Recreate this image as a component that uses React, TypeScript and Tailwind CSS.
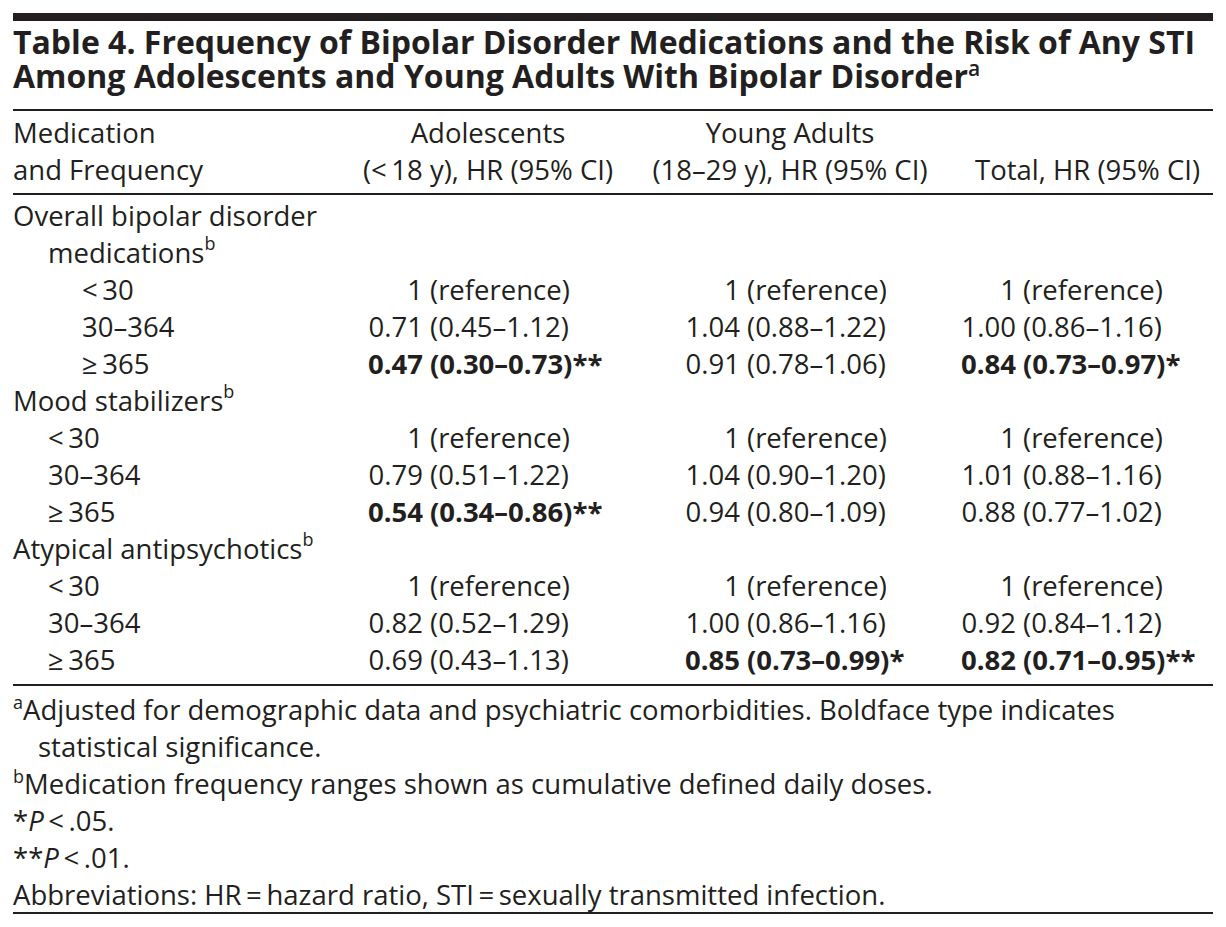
import React from 'react';

type Val = { est: string; ci: string; stars?: string; bold?: boolean };
type Row = { label: string; vals: [Val, Val, Val] };
type Section = { title: React.ReactNode; indent: string; rows: Row[] };

const ref: Val = { est: '1', ci: 'reference' };

const Sup = ({ children }: { children: React.ReactNode }) => (
  <sup className="-top-[0.7em] text-[18px] leading-none">{children}</sup>
);

const sections: Section[] = [
  {
    title: (
      <>
        Overall bipolar disorder
        <br />
        medications<Sup>b</Sup>
      </>
    ),
    indent: 'pl-[69px]',
    rows: [
      { label: '<\u200930', vals: [ref, ref, ref] },
      {
        label: '30–364',
        vals: [
          { est: '0.71', ci: '0.45–1.12' },
          { est: '1.04', ci: '0.88–1.22' },
          { est: '1.00', ci: '0.86–1.16' },
        ],
      },
      {
        label: '≥\u2009365',
        vals: [
          { est: '0.47', ci: '0.30–0.73', stars: '**', bold: true },
          { est: '0.91', ci: '0.78–1.06' },
          { est: '0.84', ci: '0.73–0.97', stars: '*', bold: true },
        ],
      },
    ],
  },
  {
    title: (
      <>
        Mood stabilizers<Sup>b</Sup>
      </>
    ),
    indent: 'pl-[35px]',
    rows: [
      { label: '<\u200930', vals: [ref, ref, ref] },
      {
        label: '30–364',
        vals: [
          { est: '0.79', ci: '0.51–1.22' },
          { est: '1.04', ci: '0.90–1.20' },
          { est: '1.01', ci: '0.88–1.16' },
        ],
      },
      {
        label: '≥\u2009365',
        vals: [
          { est: '0.54', ci: '0.34–0.86', stars: '**', bold: true },
          { est: '0.94', ci: '0.80–1.09' },
          { est: '0.88', ci: '0.77–1.02' },
        ],
      },
    ],
  },
  {
    title: (
      <>
        Atypical antipsychotics<Sup>b</Sup>
      </>
    ),
    indent: 'pl-[35px]',
    rows: [
      { label: '<\u200930', vals: [ref, ref, ref] },
      {
        label: '30–364',
        vals: [
          { est: '0.82', ci: '0.52–1.29' },
          { est: '1.00', ci: '0.86–1.16' },
          { est: '0.92', ci: '0.84–1.12' },
        ],
      },
      {
        label: '≥\u2009365',
        vals: [
          { est: '0.69', ci: '0.43–1.13' },
          { est: '0.85', ci: '0.73–0.99', stars: '*', bold: true },
          { est: '0.82', ci: '0.71–0.95', stars: '**', bold: true },
        ],
      },
    ],
  },
];

// width of the estimate box in each value column, so the "(" lines up
const estBox = ['w-[83px]', 'w-[104px]', 'w-[72px]'];

const cols = 'grid grid-cols-[327px_296px_308px_269px]';

const Value = ({ v, i }: { v: Val; i: number }) => (
  <div className={`flex whitespace-nowrap ${v.bold ? 'font-bold' : ''}`}>
    <span className={`${estBox[i]} text-right`}>{v.est}</span>
    <span className="pl-[7px]">
      ({v.ci}){v.stars && <span className="inline-block w-0">{v.stars}</span>}
    </span>
  </div>
);

const App = () => {
  return (
    <div
      className="min-h-screen bg-white pl-[13px] pt-[13px] text-[#231f20]"
      style={{ fontFamily: '"Open Sans", "Noto Sans", sans-serif' }}
    >
      <div className="w-[1200px]">
        {/* Top rule */}
        <div className="h-[8px] bg-[#231f20]" />

        {/* Title */}
        <h1 className="mt-[4px] text-[32px] font-bold leading-[34px]">
          Table 4. Frequency of Bipolar Disorder Medications and the Risk of Any STI
          <br />
          Among Adolescents and Young Adults With Bipolar Disorder
          <sup className="-top-[0.55em] text-[21px] font-semibold leading-none">a</sup>
        </h1>
        <div className="mt-[16px] h-[2px] bg-[#231f20]" />

        {/* Column headers */}
        <div className={`${cols} pt-[3px] pb-[5px] text-[27.5px] leading-[37px]`}>
          <div>
            Medication
            <br />
            and Frequency
          </div>
          <div className="text-center">
            Adolescents
            <br />
            {'(<\u200918 y), HR (95% CI)'}
          </div>
          <div className="text-center">
            Young Adults
            <br />
            (18–29 y), HR (95% CI)
          </div>
          <div className="pr-[13px] text-right">
            <br />
            Total, HR (95% CI)
          </div>
        </div>
        <div className="h-[2px] bg-[#231f20]" />

        {/* Body */}
        <div className="pt-[2px] pb-[6px] text-[27.5px] leading-[37px]">
          {sections.map((s, si) => (
            <div key={si}>
              <div className="pl-[35px] -indent-[35px]">{s.title}</div>
              {s.rows.map((r, ri) => (
                <div key={ri} className={cols}>
                  <div className={s.indent}>{r.label}</div>
                  {r.vals.map((v, i) => (
                    <Value key={i} v={v} i={i} />
                  ))}
                </div>
              ))}
            </div>
          ))}
        </div>
        <div className="h-[2px] bg-[#231f20]" />

        {/* Footnotes */}
        <div className="pt-[5px] text-[27.5px] leading-[37px]">
          <p className="pl-[25px] -indent-[25px]">
            <sup className="-top-[0.6em] text-[18px] leading-none">a</sup>Adjusted for demographic data and
            psychiatric comorbidities. Boldface type indicates
            <br />
            statistical significance.
          </p>
          <p>
            <sup className="-top-[0.6em] text-[18px] leading-none">b</sup>Medication frequency ranges shown as
            cumulative defined daily doses.
          </p>
          <p>
            *<i>P</i>
            {'\u2009<\u2009.05.'}
          </p>
          <p>
            **<i>P</i>
            {'\u2009<\u2009.01.'}
          </p>
          <p>{'Abbreviations: HR\u2009=\u2009hazard ratio, STI\u2009=\u2009sexually transmitted infection.'}</p>
        </div>
        <div className="-mt-[1px] h-[2px] bg-[#231f20]" />
      </div>
    </div>
  );
};

export default App;
